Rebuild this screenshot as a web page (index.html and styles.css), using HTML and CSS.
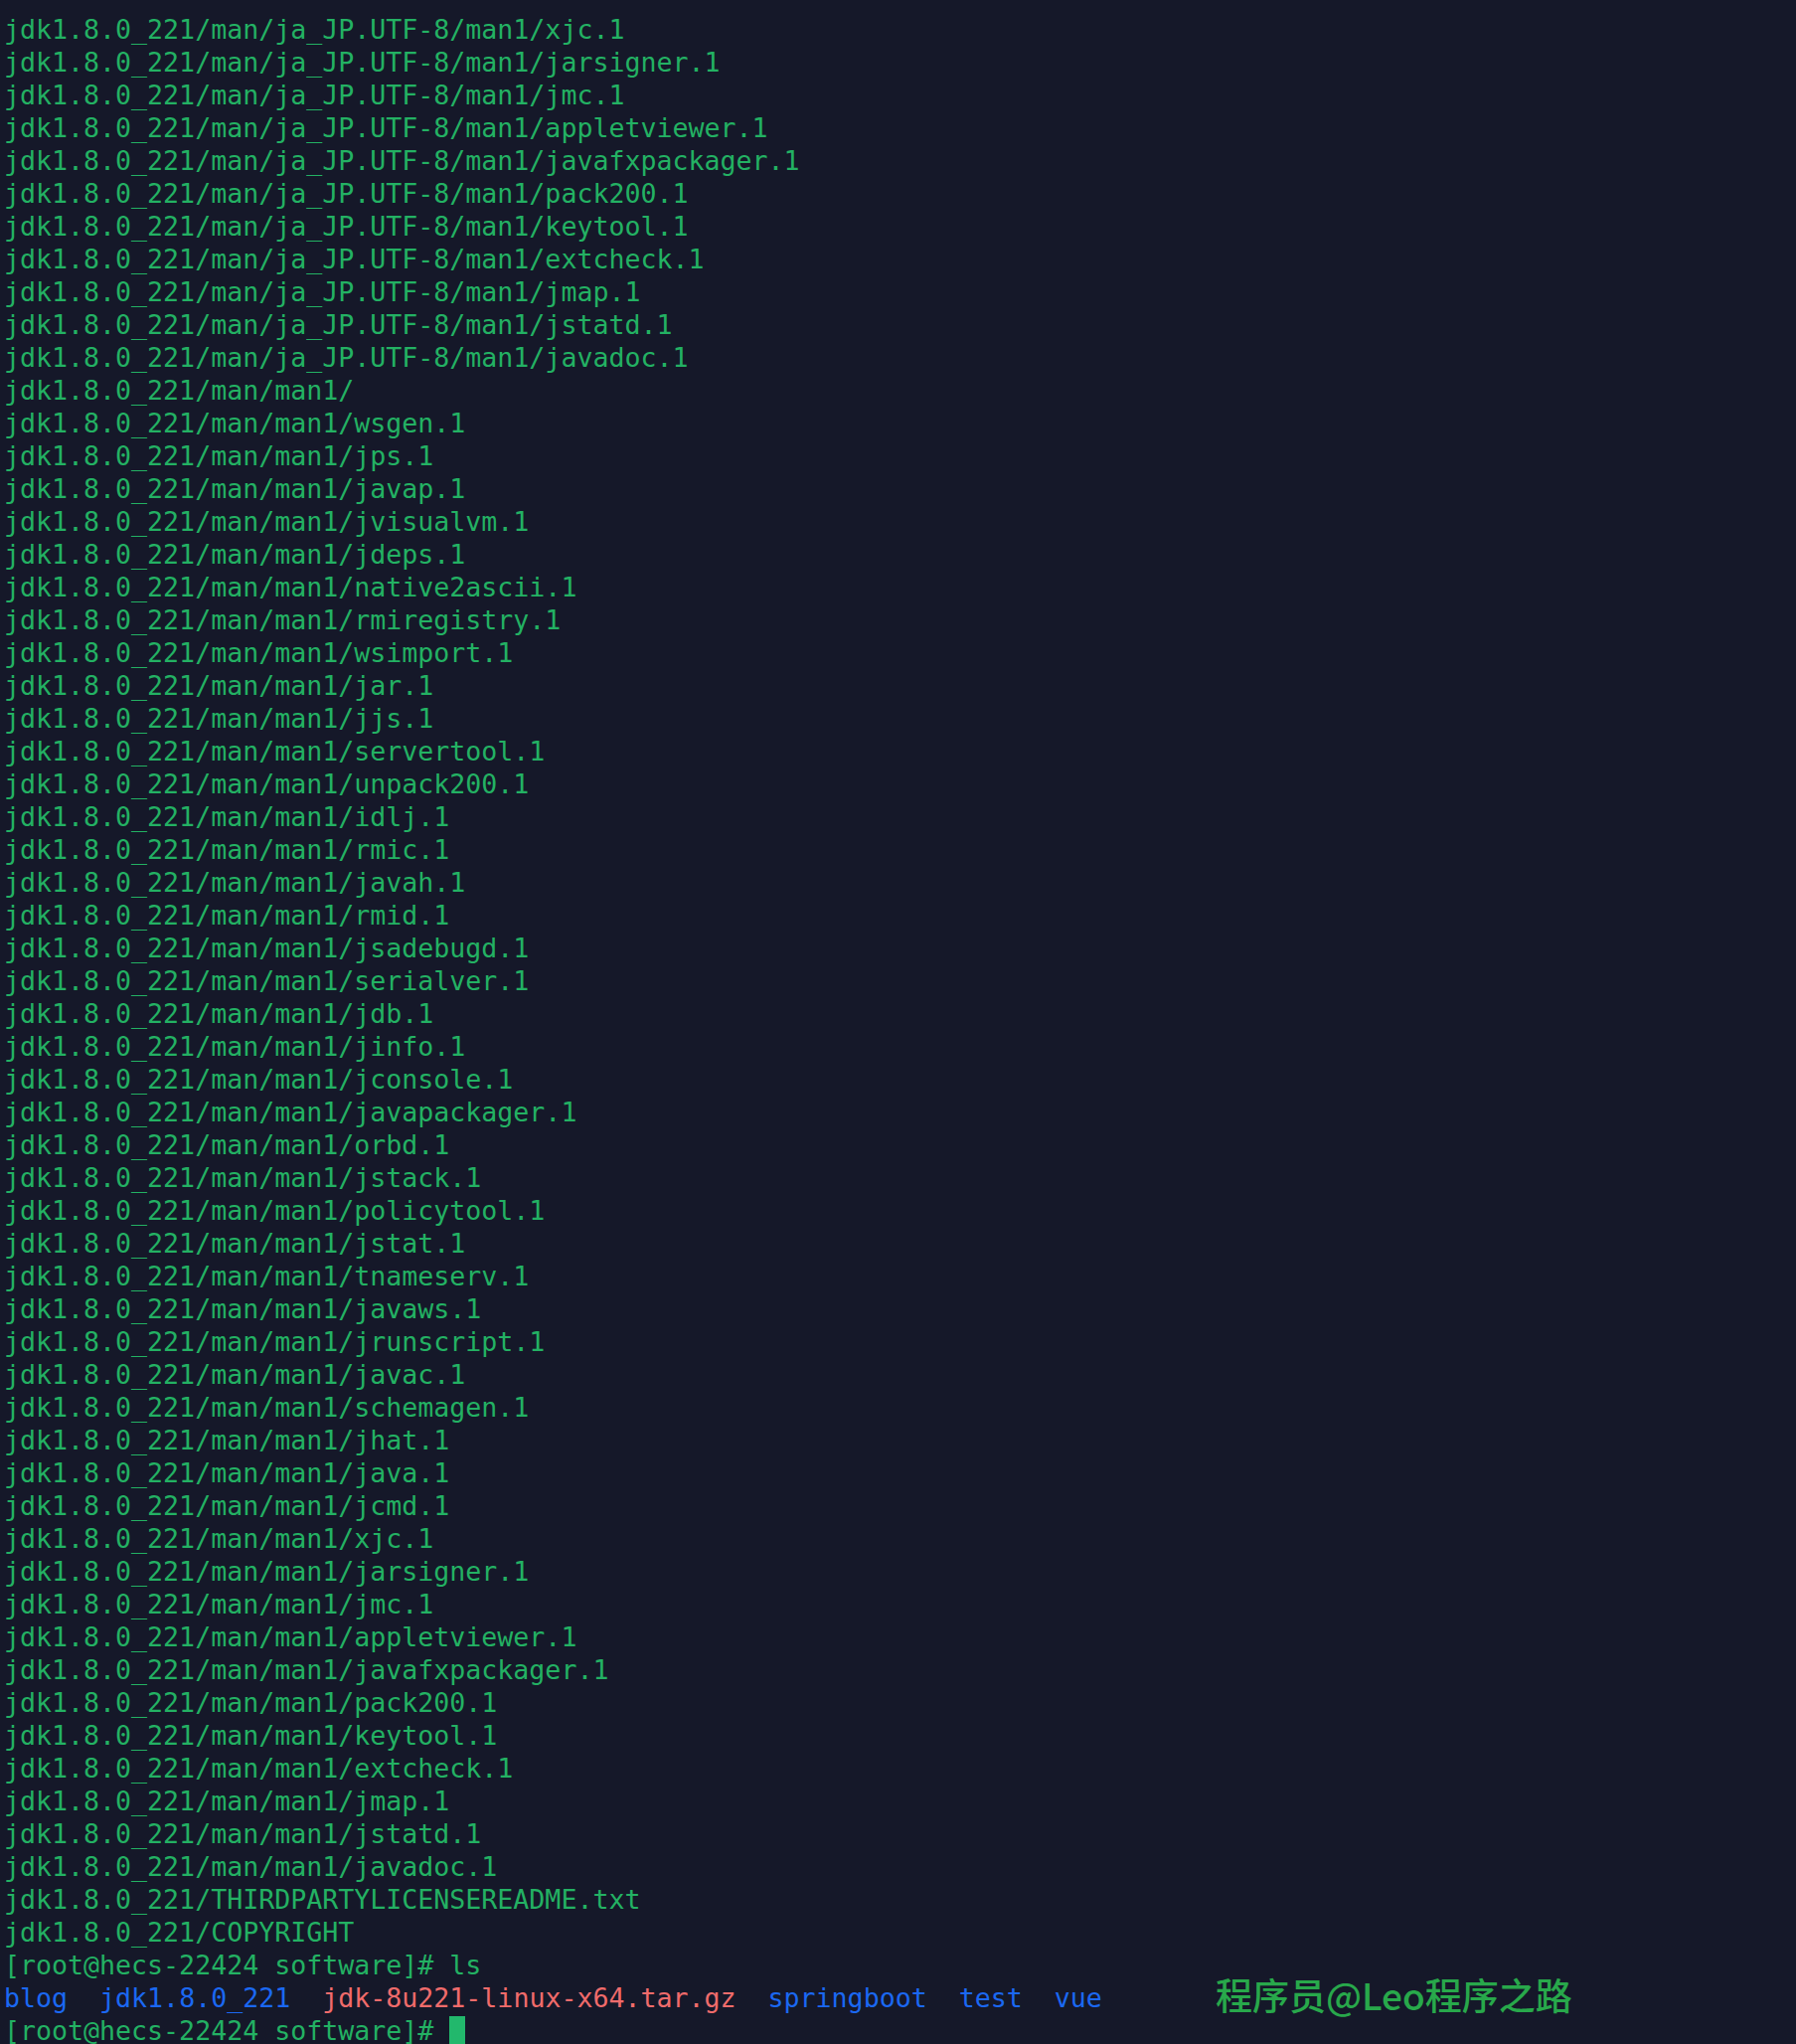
FILE: index.html
```html
<!DOCTYPE html>
<html lang="zh-CN">
<head>
  <meta charset="UTF-8" />
  <title>software - tar</title>
  <link rel="stylesheet" href="styles.css">
</head>
<body>
  <!-- salida del terminal -->
  <div class="term">
    <div class="line">jdk1.8.0_221/man/ja_JP.UTF-8/man1/xjc.1</div>
    <div class="line">jdk1.8.0_221/man/ja_JP.UTF-8/man1/jarsigner.1</div>
    <div class="line">jdk1.8.0_221/man/ja_JP.UTF-8/man1/jmc.1</div>
    <div class="line">jdk1.8.0_221/man/ja_JP.UTF-8/man1/appletviewer.1</div>
    <div class="line">jdk1.8.0_221/man/ja_JP.UTF-8/man1/javafxpackager.1</div>
    <div class="line">jdk1.8.0_221/man/ja_JP.UTF-8/man1/pack200.1</div>
    <div class="line">jdk1.8.0_221/man/ja_JP.UTF-8/man1/keytool.1</div>
    <div class="line">jdk1.8.0_221/man/ja_JP.UTF-8/man1/extcheck.1</div>
    <div class="line">jdk1.8.0_221/man/ja_JP.UTF-8/man1/jmap.1</div>
    <div class="line">jdk1.8.0_221/man/ja_JP.UTF-8/man1/jstatd.1</div>
    <div class="line">jdk1.8.0_221/man/ja_JP.UTF-8/man1/javadoc.1</div>
    <div class="line">jdk1.8.0_221/man/man1/</div>
    <div class="line">jdk1.8.0_221/man/man1/wsgen.1</div>
    <div class="line">jdk1.8.0_221/man/man1/jps.1</div>
    <div class="line">jdk1.8.0_221/man/man1/javap.1</div>
    <div class="line">jdk1.8.0_221/man/man1/jvisualvm.1</div>
    <div class="line">jdk1.8.0_221/man/man1/jdeps.1</div>
    <div class="line">jdk1.8.0_221/man/man1/native2ascii.1</div>
    <div class="line">jdk1.8.0_221/man/man1/rmiregistry.1</div>
    <div class="line">jdk1.8.0_221/man/man1/wsimport.1</div>
    <div class="line">jdk1.8.0_221/man/man1/jar.1</div>
    <div class="line">jdk1.8.0_221/man/man1/jjs.1</div>
    <div class="line">jdk1.8.0_221/man/man1/servertool.1</div>
    <div class="line">jdk1.8.0_221/man/man1/unpack200.1</div>
    <div class="line">jdk1.8.0_221/man/man1/idlj.1</div>
    <div class="line">jdk1.8.0_221/man/man1/rmic.1</div>
    <div class="line">jdk1.8.0_221/man/man1/javah.1</div>
    <div class="line">jdk1.8.0_221/man/man1/rmid.1</div>
    <div class="line">jdk1.8.0_221/man/man1/jsadebugd.1</div>
    <div class="line">jdk1.8.0_221/man/man1/serialver.1</div>
    <div class="line">jdk1.8.0_221/man/man1/jdb.1</div>
    <div class="line">jdk1.8.0_221/man/man1/jinfo.1</div>
    <div class="line">jdk1.8.0_221/man/man1/jconsole.1</div>
    <div class="line">jdk1.8.0_221/man/man1/javapackager.1</div>
    <div class="line">jdk1.8.0_221/man/man1/orbd.1</div>
    <div class="line">jdk1.8.0_221/man/man1/jstack.1</div>
    <div class="line">jdk1.8.0_221/man/man1/policytool.1</div>
    <div class="line">jdk1.8.0_221/man/man1/jstat.1</div>
    <div class="line">jdk1.8.0_221/man/man1/tnameserv.1</div>
    <div class="line">jdk1.8.0_221/man/man1/javaws.1</div>
    <div class="line">jdk1.8.0_221/man/man1/jrunscript.1</div>
    <div class="line">jdk1.8.0_221/man/man1/javac.1</div>
    <div class="line">jdk1.8.0_221/man/man1/schemagen.1</div>
    <div class="line">jdk1.8.0_221/man/man1/jhat.1</div>
    <div class="line">jdk1.8.0_221/man/man1/java.1</div>
    <div class="line">jdk1.8.0_221/man/man1/jcmd.1</div>
    <div class="line">jdk1.8.0_221/man/man1/xjc.1</div>
    <div class="line">jdk1.8.0_221/man/man1/jarsigner.1</div>
    <div class="line">jdk1.8.0_221/man/man1/jmc.1</div>
    <div class="line">jdk1.8.0_221/man/man1/appletviewer.1</div>
    <div class="line">jdk1.8.0_221/man/man1/javafxpackager.1</div>
    <div class="line">jdk1.8.0_221/man/man1/pack200.1</div>
    <div class="line">jdk1.8.0_221/man/man1/keytool.1</div>
    <div class="line">jdk1.8.0_221/man/man1/extcheck.1</div>
    <div class="line">jdk1.8.0_221/man/man1/jmap.1</div>
    <div class="line">jdk1.8.0_221/man/man1/jstatd.1</div>
    <div class="line">jdk1.8.0_221/man/man1/javadoc.1</div>
    <div class="line">jdk1.8.0_221/THIRDPARTYLICENSEREADME.txt</div>
    <div class="line">jdk1.8.0_221/COPYRIGHT</div>
    <div class="line">[root@hecs-22424 software]# ls</div>
    <div class="line"><span class="dir">blog</span>  <span class="dir">jdk1.8.0_221</span>  <span class="archive">jdk-8u221-linux-x64.tar.gz</span>  <span class="dir">springboot</span>  <span class="dir">test</span>  <span class="dir">vue</span></div>
    <div class="line">[root@hecs-22424 software]# <span class="cursor"></span></div>
  </div>

  <!-- marca de agua -->
  <div class="watermark">程序员@Leo程序之路</div>
</body>
</html>
```

FILE: styles.css
```css
body {
  margin: 0;
  background: #151829;
  height: 100vh;
  overflow: hidden;
  position: relative;
}

.term {
  padding: 12.5px 0 0 4px;
  font-family: "DejaVu Sans Mono", "Liberation Mono", monospace;
  font-size: 26.6px;
  line-height: 33px;
  color: #23b163;
}

.line {
  height: 33px;
  white-space: pre;
}

.dir {
  color: #1b68f2;
}

.archive {
  color: #f06b6b;
}

.cursor {
  display: inline-block;
  width: 16px;
  height: 31px;
  background: #22b86c;
  vertical-align: -7px;
}

/* marca de agua encima del terminal */
.watermark {
  position: absolute;
  left: 1223px;
  top: 1984px;
  font-family: "Noto Sans CJK SC", "Noto Sans", sans-serif;
  font-size: 37px;
  line-height: 44px;
  font-weight: 500;
  color: #28a84b;
}
```
